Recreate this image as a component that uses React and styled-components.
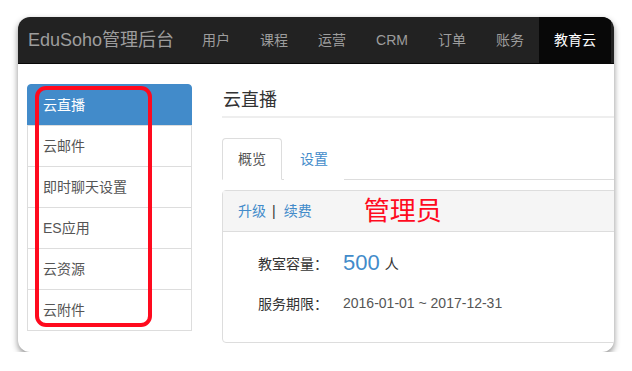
import React from 'react';
import styled, { createGlobalStyle } from 'styled-components';

const GlobalStyle = createGlobalStyle`
    body {
        margin: 0;
        background: #fff;
        font-family: "Liberation Sans", "Noto Sans CJK SC", sans-serif;
    }
`

const Card = styled.div`
    width: 596px;
    height: 335px;
    margin: 17px 0 0 18px;
    border-radius: 12px;
    overflow: hidden;
    background: #fff;
    box-shadow: 0 3px 6px rgba(0, 0, 0, 0.45);
`

const Navbar = styled.div`
    display: flex;
    height: 46px;
    background: #222;
    border-bottom: 1px solid #080808;
`

const Brand = styled.div`
    padding: 0 13px 0 10px;
    font-size: 18px;
    line-height: 46px;
    color: #9d9d9d;
    white-space: nowrap;
`

const NavItem = styled.div`
    padding: 0 15px;
    font-size: 14px;
    line-height: 46px;
    white-space: nowrap;
    color: ${props => props.active ? '#fff' : '#9d9d9d'};
    background: ${props => props.active ? '#080808' : 'transparent'};
`

const Main = styled.div`
    display: flex;
    gap: 30px;
    padding: 20px 0 0 9px;
`

const Sidebar = styled.div`
    position: relative;
    width: 165px;
    flex-shrink: 0;
`

const ListItem = styled.div`
    padding: 10px 15px;
    margin-bottom: -1px;
    font-size: 14px;
    line-height: 20px;
    border: 1px solid ${props => props.active ? '#428bca' : '#ddd'};
    background: ${props => props.active ? '#428bca' : '#fff'};
    color: ${props => props.active ? '#fff' : '#555'};
    &:first-child {
        border-radius: 4px 4px 0 0;
    }
    &:last-of-type {
        border-radius: 0 0 4px 4px;
    }
`

const RedFrame = styled.div`
    position: absolute;
    left: 8px;
    top: 2px;
    width: 109px;
    height: 233px;
    border: 4px solid #ff0a1e;
    border-radius: 11px;
    pointer-events: none;
`

const Content = styled.div`
    width: 430px;
    flex-shrink: 0;
`

const PageHeader = styled.div`
    padding: 6px 0 6px 1px;
    margin-bottom: 20px;
    font-size: 18px;
    line-height: 20px;
    color: #333;
    border-bottom: 2px solid #eee;
`

const Tabs = styled.div`
    display: flex;
    border-bottom: 1px solid #ddd;
`

const Tab = styled.div`
    padding: 10px 15px;
    margin: 0 2px -1px 0;
    font-size: 14px;
    line-height: 20px;
    border: 1px solid ${props => props.active ? '#ddd' : 'transparent'};
    border-bottom-color: transparent;
    border-radius: 4px 4px 0 0;
    background: #fff;
    color: ${props => props.active ? '#555' : '#428bca'};
`

const Panel = styled.div`
    margin-top: 10px;
    border: 1px solid #ddd;
    border-radius: 4px;
`

const PanelHeading = styled.div`
    display: flex;
    align-items: center;
    padding: 10px 15px;
    font-size: 14px;
    line-height: 20px;
    background: #f5f5f5;
    border-bottom: 1px solid #ddd;
`

const Link = styled.span`
    color: #428bca;
`

const Sep = styled.span`
    margin: 0 8px 0 6px;
    color: #333;
`

const Note = styled.span`
    margin-left: 52px;
    font-size: 26px;
    line-height: 20px;
    color: #ff0a1e;
`

const PanelBody = styled.div`
    padding: 16px 35px 24px;
`

const Row = styled.div`
    display: flex;
    align-items: center;
    height: 30px;
    & + & {
        margin-top: 10px;
    }
`

const Label = styled.div`
    width: 85px;
    font-size: 14px;
    color: #333;
`

const Big = styled.span`
    font-size: 22px;
    color: #428bca;
`

const Unit = styled.span`
    margin-left: 5px;
    font-size: 14px;
    color: #333;
`

const Dates = styled.span`
    font-size: 14px;
    color: #555;
`

const navs = ['用户', '课程', '运营', 'CRM', '订单', '账务']
const menu = ['云直播', '云邮件', '即时聊天设置', 'ES应用', '云资源', '云附件']

export default function App() {
  return (
    <>
      <GlobalStyle />
      <Card>
        <Navbar>
          <Brand>EduSoho管理后台</Brand>
          {navs.map(n => <NavItem key={n}>{n}</NavItem>)}
          <NavItem active>教育云</NavItem>
        </Navbar>
        <Main>
          <Sidebar>
            {menu.map((m, i) => <ListItem key={m} active={i === 0}>{m}</ListItem>)}
            <RedFrame />
          </Sidebar>
          <Content>
            <PageHeader>云直播</PageHeader>
            <Tabs>
              <Tab active>概览</Tab>
              <Tab>设置</Tab>
            </Tabs>
            <Panel>
              <PanelHeading>
                <Link>升级</Link>
                <Sep>|</Sep>
                <Link>续费</Link>
                <Note>管理员</Note>
              </PanelHeading>
              <PanelBody>
                <Row>
                  <Label>教室容量：</Label>
                  <Big>500</Big>
                  <Unit>人</Unit>
                </Row>
                <Row>
                  <Label>服务期限：</Label>
                  <Dates>2016-01-01 ~ 2017-12-31</Dates>
                </Row>
              </PanelBody>
            </Panel>
          </Content>
        </Main>
      </Card>
    </>
  );
}
